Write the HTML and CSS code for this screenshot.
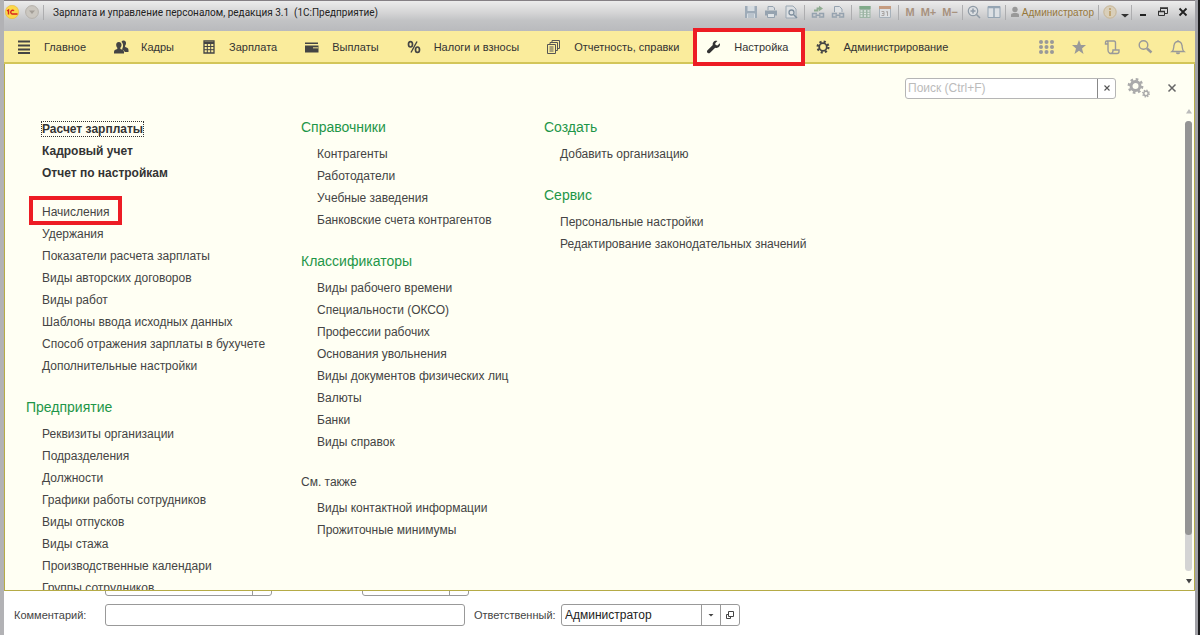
FILE: index.html
```html
<!DOCTYPE html>
<html lang="ru">
<head>
<meta charset="utf-8">
<meta name="viewport" content="width=device-width, initial-scale=1">
<title>Зарплата и управление персоналом, редакция 3.1</title>
<link rel="stylesheet" href="styles.css">
</head>
<body>
<div class="window">
  <header class="titlebar">
    <svg class="logo" viewBox="0 0 14 14" role="img" aria-label="1С"><circle cx="7" cy="7" r="6.700" fill="#fbd84a" stroke="#e8b93c" stroke-width=".6"/><path d="M2 6l1.500-1V9.500M9 5.800A1.900 1.900 0 1 0 7.300 9H12.500" fill="none" stroke="#d8231f" stroke-width="1.400"/></svg>
    <button class="tool menu-btn" aria-label="Меню"><svg viewBox="0 0 14 14"><circle cx="7" cy="7" r="6.400" fill="#cbc7c0" stroke="#b5b1ab"/><path d="M4 5.500h6L7 9z" fill="#a39e97"/></svg></button>
    <span class="sep"></span>
    <h1 class="title">Зарплата и управление персоналом, редакция 3.1 &nbsp;(1С:Предприятие)</h1>
    <div class="tools">
      <button class="tool" aria-label="Сохранить"><svg viewBox="0 0 14 14"><path d="M1 1h12v12H1z" fill="#9eabb8"/><path d="M3.500 1h7v5h-7zM3 8.500h8V13H3z" fill="#d6dce1"/><path d="M4 10h6M4 12h6" stroke="#9eabb8"/></svg></button>
      <button class="tool" aria-label="Печать"><svg viewBox="0 0 14 14"><path d="M4 5V1.500h5L10.500 3v2" fill="#d9dde1" stroke="#95a2af"/><path d="M1 5.500h12v5H1z" fill="#95a2af"/><path d="M3.500 8.500h7v4h-7z" fill="#dfe3e6" stroke="#95a2af"/></svg></button>
      <button class="tool" aria-label="Просмотр"><svg viewBox="0 0 14 14"><path d="M2 1h7l3 3v9H2z" fill="#dde0e3" stroke="#9aa7b3"/><circle cx="7.500" cy="7.500" r="2.500" fill="none" stroke="#7f8f9e" stroke-width="1.300"/><path d="m9.500 9.500 3.500 3.500" stroke="#7f8f9e" stroke-width="1.500"/></svg></button>
      <span class="sep"></span>
      <button class="tool" aria-label="Получить ссылку"><svg viewBox="0 0 14 14"><path d="M3 5.500h3.500V3.500H9" fill="none" stroke="#8fac91" stroke-width="1.800"/><path d="m8 .8 4 2.700-4 2.700z" fill="#8fac91"/><path d="M6 8.500H1.500v3.500H6M8 8.500h4.500v3.500H8M4.500 10.200h5" fill="none" stroke="#95a2af" stroke-width="1.500"/></svg></button>
      <button class="tool" aria-label="Перейти по ссылке"><svg viewBox="0 0 14 14"><path d="M3.500 7V1.500h5L11 4v3" fill="#dde0e3" stroke="#95a2af"/><path d="M6 8.500H1.500v3.500H6M8 8.500h4.500v3.500H8M4.500 10.200h5" fill="none" stroke="#95a2af" stroke-width="1.500"/></svg></button>
      <span class="sep"></span>
      <button class="tool" aria-label="Калькулятор"><svg viewBox="0 0 14 14"><path d="M1.500 1h11v12h-11z" fill="#9db5a5"/><path d="M1.500 1h11v3h-11z" fill="#80aa89"/><path d="M2.500 6h9M2.500 8.500h9M2.500 11h9" stroke="#e1e7e3" stroke-width="1.300" stroke-dasharray="2 1.500"/></svg></button>
      <button class="tool" aria-label="Календарь"><svg viewBox="0 0 14 14"><path d="M1.500 1.500h11v11h-11z" fill="#dde0e3" stroke="#a7b1ba"/><path d="M1 1h12v3H1z" fill="#c59c80"/><path d="M3.500 6.500H6v4H3.500M4 8.500h2M8 7l1.500-.5v4.500" fill="none" stroke="#a9a5a3"/></svg></button>
      <span class="sep"></span>
      <button class="tool memory">M</button>
      <button class="tool memory">M+</button>
      <button class="tool memory">M−</button>
      <span class="sep"></span>
      <button class="tool" aria-label="Масштаб"><svg viewBox="0 0 14 14"><circle cx="6" cy="6" r="4.700" fill="#dcdfe2" stroke="#8f9ba6" stroke-width="1.200"/><path d="M3.500 6h5M6 3.500v5M9.500 9.500 13 13" stroke="#8f9ba6" stroke-width="1.500"/></svg></button>
      <button class="tool" aria-label="Панели"><svg viewBox="0 0 14 14"><path d="M1 1.500h12v11H1z" fill="#dce0e4" stroke="#95a5b3"/><path d="M1 2.500h12M7 2v10" stroke="#95a5b3" stroke-width="1.500"/></svg></button>
      <span class="sep"></span>
      <button class="tool user"><svg viewBox="0 0 10 14"><circle cx="5" cy="4.500" r="2.700" fill="#999"/><path d="M1 12V9.500C1 7.500 9 7.500 9 9.500V12z" fill="#999"/></svg>Администратор</button>
      <span class="sep"></span>
      <button class="tool" aria-label="О программе"><svg viewBox="0 0 14 14"><circle cx="7" cy="7" r="6.200" fill="#d9cfba" stroke="#c6b596"/><path d="M7 3v2M7 6v5" stroke="#bb9d66" stroke-width="1.600"/></svg></button>
      <button class="tool small" aria-label="Ещё"><svg viewBox="0 0 8 14"><path d="M0 9h8l-4 3.500z" fill="#333"/></svg></button>
      <span class="sep"></span>
      <button class="tool" aria-label="Свернуть"><svg viewBox="0 0 14 14"><path d="M4 10h6" stroke="#222" stroke-width="2"/></svg></button>
      <button class="tool" aria-label="Развернуть"><svg viewBox="0 0 14 14"><path d="M4.500 6V3.500h7v5H9" fill="none" stroke="#333"/><path d="M4 3h8M2 6.500h7" stroke="#333" stroke-width="1.600"/><path d="M2.500 6.500h6v4h-6z" fill="none" stroke="#333"/></svg></button>
      <button class="tool" aria-label="Закрыть"><svg viewBox="0 0 14 14"><path d="m3.500 3.500 7 7m0-7-7 7" stroke="#222" stroke-width="1.800"/></svg></button>
    </div>
  </header>

  <nav class="sections" aria-label="Разделы">
    <a class="section" href="#main"><svg viewBox="0 0 18 18"><path d="M3 3.500h12M3 7.500h12M3 11.500h12M3 15h12" stroke="#444" stroke-width="1.800"/></svg>Главное</a>
    <a class="section" href="#staff"><svg viewBox="0 0 18 18" fill="#444"><path d="M11.500 2.500c2 0 2.700 1.400 2.500 3-.1 1.200-.7 2-1 2.500l.2 1c1.800.6 3.300 1 3.300 3V14h-3.700c-.5-1.500-2-2-3-2.400.9-1.400 1.400-3 1.200-4.600-.1-1.500-.7-2.400-1.500-3 .4-1 1-1.500 2-1.500z"/><path d="M6.800 4c2 0 2.900 1.400 2.700 3.200-.1 1.300-.6 2-1.100 2.600v1.100c2.100.8 3.600 1 3.600 3V15.500H2V13.900c0-2 1.300-2.300 3.300-3V9.800C4.700 9.200 4.300 8.500 4.200 7.200 4 5.400 4.900 4 6.800 4z"/></svg>Кадры</a>
    <a class="section" href="#salary"><svg viewBox="0 0 18 18"><path d="M4 3h10v12H4z" fill="none" stroke="#444" stroke-width="1.300"/><path d="M4 5h10" stroke="#444" stroke-width="2"/><path d="M4 8.500h10M4 11.700h10M7.300 6v9M10.700 6v9" stroke="#444"/></svg>Зарплата</a>
    <a class="section" href="#payments"><svg viewBox="0 0 18 18"><path d="M2 4.500h13V6H2zM2 7.500h13.500v7H2z" fill="#444"/><path d="M10 9h5.500v1.500H10z" fill="#b7ae78"/></svg>Выплаты</a>
    <a class="section" href="#taxes"><svg viewBox="0 0 18 18" fill="none" stroke="#444" stroke-width="1.700"><ellipse cx="5.500" cy="6.300" rx="2" ry="2.700"/><ellipse cx="12.500" cy="11.700" rx="2" ry="2.700"/><path d="m12 3.500-6 11" stroke-width="1.400"/></svg>Налоги и взносы</a>
    <a class="section" href="#reports"><svg viewBox="0 0 18 18" fill="none" stroke="#555"><path d="M7 5V2.500h7.500v8H13M5 7V4.500h7.500v8H11M2.500 6.500h8v9h-8zM4.500 9h4M4.500 11h4M4.500 13h4"/></svg>Отчетность, справки</a>
    <a class="section active" href="#settings" aria-current="page"><svg viewBox="0 0 18 18"><path d="M14.800 5.300 12.500 7.500 10.600 7 10.200 5.200 12.400 3C9.800 2 7.200 4.200 7.800 7L2.500 12.300C.9 14 3.400 16.500 5.100 14.800L10.200 9.700C13.200 10.600 15.700 8 14.800 5.300z" fill="#333"/></svg>Настройка</a>
    <a class="section" href="#admin"><svg viewBox="0 0 18 18" fill="none" stroke="#444"><circle cx="9" cy="9" r="3.800" stroke-width="1.800"/><circle cx="9" cy="9" r="5.400" stroke-width="2.200" stroke-dasharray="2.120 2.120"/></svg>Администрирование</a>
    <div class="quick">
      <button class="quick-btn" aria-label="Все функции"><svg viewBox="0 0 18 18" fill="#999"><circle cx="4" cy="4" r="2"/><circle cx="9.500" cy="4" r="2"/><circle cx="15" cy="4" r="2"/><circle cx="4" cy="9" r="2"/><circle cx="9.500" cy="9" r="2"/><circle cx="15" cy="9" r="2"/><circle cx="4" cy="14" r="2"/><circle cx="9.500" cy="14" r="2"/><circle cx="15" cy="14" r="2"/></svg></button>
      <button class="quick-btn" aria-label="Избранное"><svg viewBox="0 0 18 18"><path d="m9 2 1.900 5H16l-4 3.500 1.500 5.500L9 12.800 4.500 16 6 10.500 2 7h5.100z" fill="#999"/></svg></button>
      <button class="quick-btn" aria-label="История"><svg viewBox="0 0 18 18" fill="none" stroke="#999" stroke-width="1.400"><path d="M5 6H2.500V4.500C2.500 2.500 5 2.500 5 4.500V12c0 3.500 3 3.500 3 3.500M4 3h7c1.500 0 1.500 1 1.500 2v7H16v1.500c0 1-.5 2-2 2H8c2 0 2-1.500 2-3.500h3"/></svg></button>
      <button class="quick-btn" aria-label="Поиск"><svg viewBox="0 0 18 18" fill="none" stroke="#999"><circle cx="7.500" cy="7" r="4.300" stroke-width="1.400"/><path d="m11 10.500 4.500 4" stroke-width="2.400"/></svg></button>
      <button class="quick-btn" aria-label="Оповещения"><svg viewBox="0 0 18 18" fill="none" stroke="#999" stroke-width="1.300"><path d="M9 2v1.500M3 13.500c2-1.500 1.500-3.500 2-6 .4-2.500 2-4 4-4s3.600 1.500 4 4c.5 2.500 0 4.500 2 6z"/><path d="M7.500 14.500c.3 1.500 2.700 1.500 3 0" fill="#999"/></svg></button>
    </div>
  </nav>

  <main class="panel">
    <div class="panel-head">
      <form class="search" role="search">
        <input class="search-input" type="text" placeholder="Поиск (Ctrl+F)" aria-label="Поиск">
        <button class="search-clear" type="button" aria-label="Очистить"><svg viewBox="0 0 10 10"><path d="m2.500 2.500 5 5m0-5-5 5" stroke="#555" stroke-width="1.100"/></svg></button>
      </form>
      <button class="gears" aria-label="Настройка действий"><svg viewBox="0 0 24 20" fill="none" stroke="#aaa"><circle cx="8.500" cy="8" r="4.500" stroke-width="3"/><circle cx="8.500" cy="8" r="6.700" stroke-width="2.400" stroke-dasharray="2.630 2.630"/><circle cx="19" cy="15.500" r="2.200" stroke-width="1.500"/><circle cx="19" cy="15.500" r="3.300" stroke-width="1.400" stroke-dasharray="1.296 1.296"/></svg></button>
      <button class="panel-close" aria-label="Закрыть"><svg viewBox="0 0 10 10"><path d="m1.500 1.500 7 7m0-7-7 7" stroke="#666" stroke-width="1.500"/></svg></button>
    </div>
    <div class="panel-body">
      <div class="columns">
        <div class="column first">
          <ul class="links strong">
            <li><a class="focused" href="#1">Расчет зарплаты</a></li>
            <li><a href="#2">Кадровый учет</a></li>
            <li><a href="#3">Отчет по настройкам</a></li>
          </ul>
          <ul class="links">
            <li><a class="marked" href="#4">Начисления</a></li>
            <li><a href="#5">Удержания</a></li>
            <li><a href="#6">Показатели расчета зарплаты</a></li>
            <li><a href="#7">Виды авторских договоров</a></li>
            <li><a href="#8">Виды работ</a></li>
            <li><a href="#9">Шаблоны ввода исходных данных</a></li>
            <li><a href="#10">Способ отражения зарплаты в бухучете</a></li>
            <li><a href="#11">Дополнительные настройки</a></li>
          </ul>
          <h2 class="group">Предприятие</h2>
          <ul class="links">
            <li><a href="#12">Реквизиты организации</a></li>
            <li><a href="#13">Подразделения</a></li>
            <li><a href="#14">Должности</a></li>
            <li><a href="#15">Графики работы сотрудников</a></li>
            <li><a href="#16">Виды отпусков</a></li>
            <li><a href="#17">Виды стажа</a></li>
            <li><a href="#18">Производственные календари</a></li>
            <li><a href="#19">Группы сотрудников</a></li>
          </ul>
        </div>
        <div class="column">
          <h2 class="group">Справочники</h2>
          <ul class="links">
            <li><a href="#20">Контрагенты</a></li>
            <li><a href="#21">Работодатели</a></li>
            <li><a href="#22">Учебные заведения</a></li>
            <li><a href="#23">Банковские счета контрагентов</a></li>
          </ul>
          <h2 class="group">Классификаторы</h2>
          <ul class="links">
            <li><a href="#24">Виды рабочего времени</a></li>
            <li><a href="#25">Специальности (ОКСО)</a></li>
            <li><a href="#26">Профессии рабочих</a></li>
            <li><a href="#27">Основания увольнения</a></li>
            <li><a href="#28">Виды документов физических лиц</a></li>
            <li><a href="#29">Валюты</a></li>
            <li><a href="#30">Банки</a></li>
            <li><a href="#31">Виды справок</a></li>
          </ul>
          <h2 class="group plain">См. также</h2>
          <ul class="links">
            <li><a href="#32">Виды контактной информации</a></li>
            <li><a href="#33">Прожиточные минимумы</a></li>
          </ul>
        </div>
        <div class="column">
          <h2 class="group">Создать</h2>
          <ul class="links">
            <li><a href="#34">Добавить организацию</a></li>
          </ul>
          <h2 class="group">Сервис</h2>
          <ul class="links">
            <li><a href="#35">Персональные настройки</a></li>
            <li><a href="#36">Редактирование законодательных значений</a></li>
          </ul>
        </div>
      </div>
      <div class="scroll" aria-hidden="true">
        <svg class="arrow" viewBox="0 0 8 6"><path d="M1 5.500 4 1l3 4.500z" fill="#bbb"/></svg>
        <div class="track"><div class="thumb"></div></div>
        <svg class="arrow" viewBox="0 0 8 6"><path d="M1 1h6L4 5.500z" fill="#444"/></svg>
      </div>
    </div>
  </main>

  <form class="document">
    <div class="row covered">
      <div class="field wide"><input type="text" aria-label="Подразделение"><button type="button" aria-label="Выбрать"></button></div>
      <div class="field narrow"><input type="text" aria-label="Период"><button type="button" aria-label="Выбрать"></button></div>
    </div>
    <div class="row">
      <label class="comment-label" for="comment">Комментарий:</label>
      <div class="field comment"><input id="comment" type="text"></div>
      <label class="owner-label" for="owner">Ответственный:</label>
      <div class="field owner"><input id="owner" type="text" value="Администратор"><button type="button" aria-label="Список"><svg viewBox="0 0 10 10"><path d="M2.500 4h5L5 6.500z" fill="#444"/></svg></button><button type="button" aria-label="Открыть"><svg viewBox="0 0 10 10" fill="none" stroke="#444"><path d="M3.500 1.500h5v5h-5zM3.500 4.500h-2v4h4v-2"/></svg></button></div>
    </div>
  </form>
</div>
</body>
</html>
```
FILE: styles.css
```css
* { box-sizing: border-box; }

body {
  margin: 0;
  border-right: 2px solid #1c1c1e;
  background: #fff;
  font-family: "Liberation Sans", Arial, sans-serif;
  font-size: 12px;
  color: #444;
}

button, input { font: inherit; color: inherit; }

button {
  margin: 0;
  padding: 0;
  border: 0;
  background: none;
  cursor: pointer;
}

svg { display: block; }
a { color: inherit; text-decoration: none; }
ul { margin: 0; padding: 0; list-style: none; }

.window {
  display: flex;
  flex-direction: column;
  height: 100vh;
  border: solid #b2b2b5;
  border-width: 0 3px 0 4px;
  border-right-color: #a0a0a6;
  overflow: hidden;
}

/* Title bar */
.titlebar {
  display: flex;
  flex: none;
  align-items: center;
  height: 31px;
  margin: 0 -3px 0 -4px;
  padding: 0 8px 8px 5px;
  border-top: 1px solid #858085;
  background: linear-gradient(#ececec, #d4d4d5 40%, #c2c3c5 65%, #b9babd);
}

.logo { width: 14px; height: 14px; }
.menu-btn { margin-left: 6px; }

.tool svg { width: 14px; height: 14px; }

.sep {
  width: 1px;
  height: 15px;
  margin: 0 4px;
  background: #adadaf;
}

.title {
  margin: 0 0 0 5px;
  font-family: Roboto, "Liberation Sans", sans-serif;
  font-size: 10px;
  font-weight: 400;
  color: #222;
  white-space: nowrap;
}

.tools {
  display: flex;
  align-items: center;
  gap: 6px;
  margin-left: auto;
}

.tools .sep { margin: 0; }
.tools .memory ~ .sep { margin: 0 -2px; }
.memory { font-size: 11px; font-weight: 700; color: #a8927f; }
.user { display: flex; align-items: center; gap: 2px; font-size: 10px; color: #97783c; }
.user svg { width: 10px; }
.small { margin: 0 -2px; }
.small svg { width: 8px; }

/* Section bar */
.sections {
  display: flex;
  flex: none;
  height: 33px;
  padding-right: 8px;
  border-bottom: 2px solid #d3c659;
  background: #faec9c;
  font-size: 11px;
}

.section {
  position: relative;
  display: flex;
  align-items: center;
  gap: 11px;
  padding: 0 15px 0 11px;
  color: #333;
  white-space: nowrap;
}

.section svg { width: 18px; height: 18px; }
.active { background: #fffff0; }

.active::after {
  position: absolute;
  inset: -3px -2px -4px -1px;
  border: 4px solid #ed1c24;
  content: "";
  z-index: 2;
}

.quick { display: flex; align-items: center; gap: 15px; margin-left: auto; }
.quick-btn svg { width: 18px; height: 18px; }

/* Functions panel */
.panel {
  display: flex;
  flex: 1;
  flex-direction: column;
  min-height: 0;
  z-index: 1;
  border: solid #b5ab46;
  border-width: 0 1px 1px;
  background: #fffff3;
}

.sections { z-index: 2; }

.panel-head {
  display: flex;
  flex: none;
  align-items: center;
  justify-content: flex-end;
  height: 42px;
  padding: 6px 17px 0 0;
}

.search {
  display: flex;
  width: 211px;
  height: 21px;
  border: 1px solid #b5b5b5;
  border-radius: 3px;
  background: #fff;
}

.search-input {
  flex: 1;
  min-width: 0;
  padding: 0 2px;
  border: 0;
  background: none;
  outline: 0;
}

.search-input::placeholder { color: #bbb; opacity: 1; }

.search-clear {
  display: grid;
  place-items: center;
  width: 18px;
  border-left: 1px solid #888;
}

.search-clear svg, .panel-close svg { width: 10px; height: 10px; }
.gears { margin-left: 11px; }
.gears svg { width: 24px; height: 20px; }
.panel-close { margin-left: 16px; }

.panel-body { display: flex; flex: 1; min-height: 0; }

.columns {
  display: grid;
  flex: 1;
  grid-template-columns: 275px 243px 1fr;
  padding: 11px 0 0 21px;
  overflow: hidden;
}

.first { padding-top: 1px; }
.links { padding-left: 16px; line-height: 22px; white-space: nowrap; }
.strong { margin-bottom: 17px; font-weight: 700; color: #333; }

.group {
  margin: 20px 0 6px;
  font-size: 14px;
  font-weight: 400;
  line-height: 20px;
  color: #1e9648;
}

.group:first-child { margin-top: 0; }
.plain { font-size: 12px; line-height: 18px; color: #444; }
.focused { outline: 1px dotted #333; }
.marked { position: relative; }

.marked::after {
  position: absolute;
  inset: -9px -12px -6px -13px;
  border: 4px solid #ed1c24;
  content: "";
}

.scroll {
  display: flex;
  flex-direction: column;
  align-items: center;
  width: 11px;
  padding: 2px 0 6px;
}

.arrow { width: 8px; height: 6px; }

.track {
  flex: 1;
  width: 7px;
  margin: 7px 0;
  border-radius: 4px;
  background: #d4d4d4;
}

.thumb { height: 92%; border-radius: 4px; background: #949494; }

/* Document form behind the panel */
.document { flex: none; padding: 0 0 9px 10px; background: #fff; }
.row { display: flex; align-items: center; }
.covered { gap: 90px; margin: -17px 0 8px 91px; }

.field {
  display: flex;
  height: 22px;
  border: 1px solid #999;
  border-radius: 3px;
  background: #fff;
}

.field input {
  flex: 1;
  min-width: 0;
  padding: 0 3px;
  border: 0;
  background: none;
  outline: 0;
  color: #222;
}

.field button {
  display: grid;
  place-items: center;
  width: 19px;
  border-left: 1px solid #999;
}

.field svg { width: 10px; height: 10px; }
.wide { width: 167px; }
.narrow { width: 107px; }
.comment-label, .owner-label { font-size: 11px; }
.comment-label { width: 91px; }
.comment { width: 360px; }
.owner-label { width: 87px; margin-left: 9px; }
.owner { width: 179px; }
```
